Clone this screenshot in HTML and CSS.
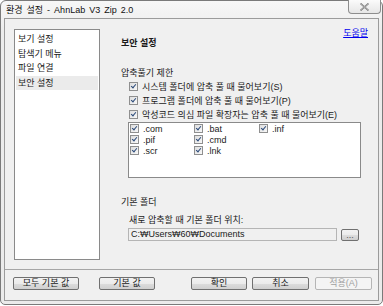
FILE: index.html
```html
<!DOCTYPE html>
<html lang="ko">
<head>
    <meta charset="UTF-8">
    <title>환경 설정 - AhnLab V3 Zip 2.0</title>
    <link rel="stylesheet" href="styles.css">
</head>
<body>
    <div class="window">
        <div class="titlebar">
            <span class="title">환경 설정 - AhnLab V3 Zip 2.0</span>
            <span class="close-btn">
                <svg width="11" height="8" viewBox="0 0 11 8">
                    <path d="M1.5 0.5 L9.5 7.5 M9.5 0.5 L1.5 7.5" stroke="#6b6b6b" stroke-width="1.6" fill="none"/>
                    <path d="M1.5 0.5 L9.5 7.5 M9.5 0.5 L1.5 7.5" stroke="#f4f4f4" stroke-width="0.5" fill="none"/>
                </svg>
            </span>
        </div>
        <div class="client">
            <div class="content">
                <ul class="nav">
                    <li>보기 설정</li>
                    <li>탐색기 메뉴</li>
                    <li>파일 연결</li>
                    <li class="selected">보안 설정</li>
                </ul>
                <div class="main">
                    <div class="main-head">
                        <span class="page-title">보안 설정</span>
                        <a class="help" href="#">도움말</a>
                    </div>

                    <div class="group-label">압축풀기 제한</div>
                    <div class="check-row"><span class="box"></span>시스템 폴더에 압축 풀 때 물어보기(S)</div>
                    <div class="check-row"><span class="box"></span>프로그램 폴더에 압축 풀 때 물어보기(P)</div>
                    <div class="check-row"><span class="box"></span>악성코드 의심 파일 확장자는 압축 풀 때 물어보기(E)</div>

                    <div class="ext-list">
                        <div class="ext"><span class="box"></span>.com</div>
                        <div class="ext"><span class="box"></span>.pif</div>
                        <div class="ext"><span class="box"></span>.scr</div>
                        <div class="ext"><span class="box"></span>.bat</div>
                        <div class="ext"><span class="box"></span>.cmd</div>
                        <div class="ext"><span class="box"></span>.lnk</div>
                        <div class="ext"><span class="box"></span>.inf</div>
                    </div>

                    <div class="group-label folder-label">기본 폴더</div>
                    <div class="sub-label">새로 압축할 때 기본 폴더 위치:</div>
                    <div class="folder-row">
                        <div class="path-box">C:₩Users₩60₩Documents</div>
                        <button class="browse">...</button>
                    </div>
                </div>
            </div>
            <div class="footer">
                <button class="btn btn-all">모두 기본 값</button>
                <button class="btn btn-default">기본 값</button>
                <button class="btn btn-ok">확인</button>
                <button class="btn btn-cancel">취소</button>
                <button class="btn btn-apply" disabled>적용(A)</button>
            </div>
        </div>
    </div>
</body>
</html>
```

FILE: styles.css
```css
body {
    margin: 0;
    background-color: #ffffff;
    font-family: "Liberation Sans", "Noto Sans CJK KR", sans-serif;
    font-size: 9px;
    color: #1a1a1a;
}
.window {
    border: 1px solid #7a7a7a;
    border-radius: 6px 6px 5px 5px;
    background: linear-gradient(#f7f7f7, #ececec 30px, #ebebeb);
    padding: 0 3px 3px 3px;
    width: 375px;
    height: 300px;
}
.titlebar {
    height: 17px;
    display: flex;
    justify-content: space-between;
    position: relative;
}
.title {
    margin-left: 2px;
    line-height: 18px;
    word-spacing: 1.5px;
    color: #111;
}
.close-btn {
    position: absolute;
    right: -2px;
    top: -1px;
    width: 31px;
    height: 13px;
    border: 1px solid #8d8d8d;
    border-top: none;
    border-radius: 0 0 4px 4px;
    background: linear-gradient(#fbfbfb, #e6e6e6);
    display: flex;
    align-items: center;
    justify-content: center;
}
.client {
    border: 1px solid #9b9b9b;
    background-color: #f0f0f0;
    height: 281px;
}
.content {
    display: flex;
    height: 240px;
    padding: 10px 10px 0 9px;
    border-bottom: 1px solid #a6a6a6;
}
.nav {
    list-style: none;
    margin: 0;
    padding: 2px 1px;
    width: 82px;
    height: 225px;
    background-color: #ffffff;
    border: 1px solid #8a8a8a;
}
.nav li {
    height: 14.5px;
    line-height: 14.5px;
    padding-left: 2px;
}
.nav li.selected {
    background-color: #ebebeb;
}
.main {
    flex: 1;
    margin-left: 21px;
}
.main-head {
    display: flex;
    justify-content: space-between;
    align-items: flex-start;
    height: 20px;
}
.page-title {
    font-weight: bold;
    margin-top: 8px;
    line-height: 12px;
}
.help {
    margin-top: -2px;
    line-height: 12px;
    color: #0000ee;
}
.group-label {
    margin-top: 18px;
    line-height: 12px;
}
.check-row {
    display: flex;
    align-items: center;
    height: 14px;
    padding-left: 8px;
}
.check-row:first-of-type {
    margin-top: 7px;
}
.box {
    width: 7px;
    height: 7px;
    border: 1px solid #8f8f8f;
    background: linear-gradient(135deg, #dedede, #f8f8f8);
    margin-right: 4px;
    flex-shrink: 0;
    position: relative;
}
.box::after {
    content: "";
    position: absolute;
    left: 2px;
    top: 0px;
    width: 2px;
    height: 4px;
    border: solid #2b4a7a;
    border-width: 0 1.4px 1.4px 0;
    transform: rotate(40deg);
}
.ext-list {
    margin: 1px 0 0 7px;
    width: 230px;
    height: 54px;
    border: 1px solid #8a8a8a;
    background-color: #ffffff;
    display: grid;
    grid-template-columns: 64px 65px 1fr;
    grid-template-rows: repeat(3, 11px);
    grid-auto-flow: column;
    padding-left: 1px;
}
.ext {
    display: flex;
    align-items: center;
}
.folder-label {
    margin-top: 18px;
}
.sub-label {
    margin-top: 6px;
    padding-left: 8px;
    line-height: 12px;
}
.folder-row {
    display: flex;
    margin: 2px 0 0 7px;
}
.path-box {
    width: 205px;
    height: 11px;
    line-height: 11px;
    padding-left: 2px;
    border: 1px solid #b5b5b5;
    background-color: #f0f0f0;
}
button {
    font-family: "Liberation Sans", "Noto Sans CJK KR", sans-serif;
    font-size: 9px;
    padding: 0;
    color: #1a1a1a;
    border: 1px solid #707070;
    border-radius: 2px;
    background: linear-gradient(#f2f2f2, #ebebeb 50%, #dddddd 51%, #cfcfcf);
}
.browse {
    width: 18px;
    height: 12px;
    margin: 1px 0 0 4px;
    line-height: 10px;
    color: #555;
}
.footer {
    display: flex;
    padding: 7px 0 0 8px;
}
.btn {
    height: 13px;
    width: 57px;
    line-height: 11px;
}
.btn-all {
    width: 66px;
}
.btn-default {
    width: 56px;
    margin-left: 20px;
}
.btn-ok {
    width: 56px;
    margin-left: 36px;
}
.btn-cancel {
    margin-left: 5px;
}
.btn-apply {
    margin-left: 6px;
    color: #a0a0a0;
    border-color: #b5b5b5;
    background: #f4f4f4;
}
```
